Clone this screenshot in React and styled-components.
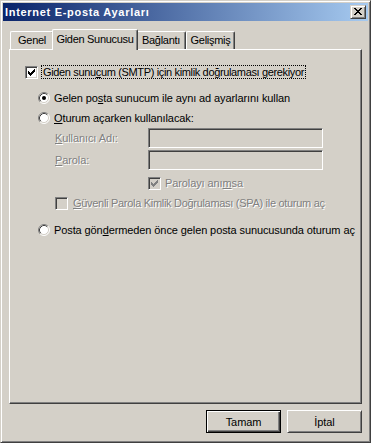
import React from 'react';
import styled, { createGlobalStyle } from 'styled-components';

const FACE = '#D4D0C8';

const GlobalStyle = createGlobalStyle`
  html, body {
    margin: 0;
    padding: 0;
    background: ${FACE};
  }
  body {
    font-family: "Liberation Sans", Arial, sans-serif;
    font-size: 11px;
    letter-spacing: -0.1px;
    color: #000;
  }
`;

const Window = styled.div`
  box-sizing: border-box;
  width: 371px;
  height: 443px;
  display: flex;
  flex-direction: column;
  padding: 2px;
  background: ${FACE};
  border: 1px solid;
  border-color: ${FACE} #404040 #404040 ${FACE};
  box-shadow: inset 1px 1px #fff, inset -1px -1px #808080;
`;

const TitleBar = styled.div`
  height: 18px;
  flex: none;
  display: flex;
  align-items: center;
  justify-content: space-between;
  padding: 0 2px 0 2px;
  background: linear-gradient(to right, #0a246a, #a6caf0);
`;

const Title = styled.span`
  color: #fff;
  font-weight: bold;
  font-size: 11px;
  font-family: "Liberation Sans", Arial, sans-serif;
  letter-spacing: 0.7px;
`;

const CloseButton = styled.div`
  box-sizing: border-box;
  width: 16px;
  height: 14px;
  background: ${FACE};
  border: 1px solid;
  border-color: ${FACE} #404040 #404040 ${FACE};
  box-shadow: inset 1px 1px #fff, inset -1px -1px #808080;
  display: flex;
  padding: 2px 0 0 3px;

  svg {
    display: block;
  }
`;

const Client = styled.div`
  flex: 1;
  display: flex;
  flex-direction: column;
  padding: 8px 6px 7px 6px;
  min-height: 0;
`;

const TabStrip = styled.div`
  display: flex;
  align-items: flex-end;
  height: 20px;
  padding-left: 1px;
  flex: none;
`;

const Tab = styled.div`
  position: relative;
  box-sizing: border-box;
  width: ${({ $w }) => $w}px;
  height: ${({ $active }) => ($active ? 21 : 18)}px;
  margin: ${({ $active }) => ($active ? '0 -2px -1px -2px' : '0')};
  z-index: ${({ $active }) => ($active ? 2 : 1)};
  padding-top: ${({ $active }) => ($active ? 3 : 2)}px;
  text-align: center;
  letter-spacing: -0.3px;
  background: ${FACE};
  border-top: 1px solid #fff;
  border-left: 1px solid #fff;
  border-right: 1px solid #404040;
  border-radius: 2px 2px 0 0;
  box-shadow: inset -1px 0 #808080;
  white-space: nowrap;
`;

const Panel = styled.div`
  flex: 1;
  display: flex;
  flex-direction: column;
  padding: 15px 0 0 0;
  background: ${FACE};
  border: 1px solid;
  border-color: #fff #404040 #404040 #fff;
  box-shadow: inset -1px -1px #808080;
`;

const Row = styled.div`
  display: flex;
  align-items: center;
  height: ${({ $h }) => $h || 14}px;
  margin-top: ${({ $top }) => $top || 0}px;
  margin-left: ${({ $indent }) => $indent || 0}px;
  white-space: nowrap;
`;

const Label = styled.span`
  margin-left: ${({ $gap }) => ($gap == null ? 4 : $gap)}px;
  letter-spacing: ${({ $tight }) => ($tight ? '-0.3px' : 'inherit')};
  color: ${({ $disabled }) => ($disabled ? '#808080' : '#000')};
  text-shadow: ${({ $disabled }) => ($disabled ? '1px 1px 0 #fff' : 'none')};
`;

const FocusLabel = styled.span`
  margin-left: 3px;
  padding: 0 1px;
  line-height: 12px;
  letter-spacing: -0.35px;
  border: 1px dotted #000;
`;

const FieldLabel = styled.span`
  width: 93px;
  color: #808080;
  text-shadow: 1px 1px 0 #fff;
`;

const Key = styled.span`
  text-decoration: underline;
`;

const Box = styled.span`
  box-sizing: border-box;
  display: block;
  flex: none;
  width: 13px;
  height: 13px;
  padding: 2px 0 0 2px;
  background: ${({ $disabled }) => ($disabled ? FACE : '#fff')};
  border: 1px solid;
  border-color: #808080 #fff #fff #808080;
  box-shadow: inset 1px 1px #404040, inset -1px -1px ${FACE};

  svg {
    display: block;
  }
`;

const Edit = styled.div`
  box-sizing: border-box;
  width: 175px;
  height: 20px;
  background: ${FACE};
  border: 1px solid;
  border-color: #808080 #fff #fff #808080;
  box-shadow: inset 1px 1px #404040, inset -1px -1px ${FACE};
`;

const ButtonRow = styled.div`
  display: flex;
  justify-content: flex-end;
  gap: 6px;
  margin-top: 6px;
  flex: none;
`;

const Button = styled.div`
  box-sizing: border-box;
  width: 75px;
  height: 23px;
  display: flex;
  align-items: center;
  justify-content: center;
  background: ${FACE};
  border: 1px solid;
  border-color: ${({ $default }) => ($default ? '#000' : '#fff #404040 #404040 #fff')};
  box-shadow: ${({ $default }) =>
    $default
      ? 'inset 1px 1px #fff, inset -1px -1px #404040, inset -2px -2px #808080'
      : `inset 1px 1px ${FACE}, inset -1px -1px #808080`};
`;

const CheckMark = ({ color }) => (
  <svg width="7" height="7" viewBox="0 0 7 7" shapeRendering="crispEdges">
    <path
      fill={color}
      d="M0 2h1v3h-1z M1 3h1v3h-1z M2 4h1v3h-1z M3 3h1v3h-1z M4 2h1v3h-1z M5 1h1v3h-1z M6 0h1v3h-1z"
    />
  </svg>
);

const Checkbox = ({ checked, disabled }) => (
  <Box $disabled={disabled}>
    {checked && <CheckMark color={disabled ? '#808080' : '#000'} />}
  </Box>
);

const Radio = ({ checked }) => (
  <svg width="12" height="12" viewBox="0 0 12 12" style={{ flex: 'none' }}>
    <circle cx="6" cy="6" r="5" fill="#fff" />
    <path d="M2.11 9.89 A5.5 5.5 0 0 1 9.89 2.11" fill="none" stroke="#808080" />
    <path d="M9.89 2.11 A5.5 5.5 0 0 1 2.11 9.89" fill="none" stroke="#fff" />
    <path d="M2.82 9.18 A4.5 4.5 0 0 1 9.18 2.82" fill="none" stroke="#404040" />
    <path d="M9.18 2.82 A4.5 4.5 0 0 1 2.82 9.18" fill="none" stroke={FACE} />
    {checked && <circle cx="6" cy="6" r="2" fill="#000" />}
  </svg>
);

const CloseGlyph = () => (
  <svg width="8" height="7" viewBox="0 0 8 7" shapeRendering="crispEdges">
    <path
      fill="#000"
      d="M0 0h2v1h-2z M6 0h2v1h-2z M1 1h2v1h-2z M5 1h2v1h-2z M2 2h4v1h-4z M3 3h2v1h-2z M2 4h4v1h-4z M1 5h2v1h-2z M5 5h2v1h-2z M0 6h2v1h-2z M6 6h2v1h-2z"
    />
  </svg>
);

const tabs = [
  { label: 'Genel', w: 44 },
  { label: 'Giden Sunucusu', w: 86, active: true },
  { label: 'Bağlantı', w: 50 },
  { label: 'Gelişmiş', w: 49 },
];

export default function App() {
  return (
    <>
      <GlobalStyle />
      <Window>
        <TitleBar>
          <Title>Internet E-posta Ayarları</Title>
          <CloseButton>
            <CloseGlyph />
          </CloseButton>
        </TitleBar>
        <Client>
          <TabStrip>
            {tabs.map((t) => (
              <Tab key={t.label} $w={t.w} $active={t.active}>
                {t.label}
              </Tab>
            ))}
          </TabStrip>
          <Panel>
            <Row $indent={15}>
              <Checkbox checked />
              <FocusLabel>
                Giden sunu<Key>c</Key>um (SMTP) için kimlik doğrulaması gerekiyor
              </FocusLabel>
            </Row>
            <Row $indent={28} $top={11} $h={16}>
              <Radio checked />
              <Label>
                Gelen po<Key>s</Key>ta sunucum ile aynı ad ayarlarını kullan
              </Label>
            </Row>
            <Row $indent={28} $top={4} $h={16}>
              <Radio />
              <Label>
                <Key>O</Key>turum açarken kullanılacak:
              </Label>
            </Row>
            <Row $indent={45} $top={2} $h={20}>
              <FieldLabel>
                <Key>K</Key>ullanıcı Adı:
              </FieldLabel>
              <Edit />
            </Row>
            <Row $indent={45} $top={2} $h={20}>
              <FieldLabel>
                <Key>P</Key>arola:
              </FieldLabel>
              <Edit />
            </Row>
            <Row $indent={138} $top={6}>
              <Checkbox checked disabled />
              <Label $disabled>
                Parolayı anı<Key>m</Key>sa
              </Label>
            </Row>
            <Row $indent={45} $top={6}>
              <Checkbox disabled />
              <Label $disabled $tight $gap={5}>
                <Key>G</Key>üvenli Parola Kimlik Doğrulaması (SPA) ile oturum aç
              </Label>
            </Row>
            <Row $indent={28} $top={12} $h={16}>
              <Radio />
              <Label>
                Posta gön<Key>d</Key>ermeden önce gelen posta sunucusunda oturum aç
              </Label>
            </Row>
          </Panel>
          <ButtonRow>
            <Button $default>Tamam</Button>
            <Button>İptal</Button>
          </ButtonRow>
        </Client>
      </Window>
    </>
  );
}
